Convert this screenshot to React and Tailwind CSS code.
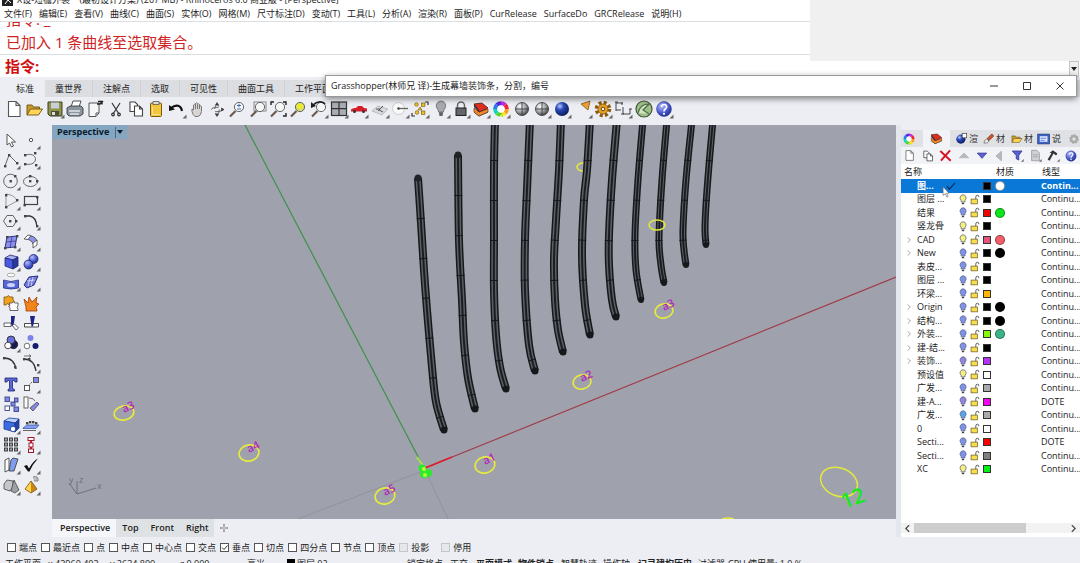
import React, { useState } from 'react';

const menus = [
  '文件(F)', '编辑(E)', '查看(V)', '曲线(C)', '曲面(S)', '实体(O)', '网格(M)', '尺寸标注(D)', '变动(T)',
  '工具(L)', '分析(A)', '渲染(R)', '面板(P)', 'CurRelease', 'SurfaceDo', 'GRCRelease', '说明(H)',
];

const toolTabs = ['标准', '童世界', '注解点', '选取', '可见性', '曲面工具', '工作平面'];

const wheelColors = ['#ff9a1f', '#ffe61f', '#4fd62b', '#19cfc0', '#2a7af0', '#4d2be0', '#c42be0', '#f0243c'];

// Small shared shapes
const Dots = ({ at, fill = '#444' }) => at.map(([x, y]) => (
  <rect key={`${x}-${y}`} x={x - 1} y={y - 1} width="2.4" height="2.4" fill={fill} />
));

const Wheel = () => (
  <g>
    {wheelColors.map((color, i) => (
      <circle key={color} cx="10" cy="10" r="5.3" fill="none" stroke={color} strokeWidth="3.6"
        pathLength="8" strokeDasharray="1 7" strokeDashoffset={-i} />
    ))}
    <circle cx="10" cy="10" r="3.2" fill="#fff" />
  </g>
);

const Lens = ({ fill = '#f4f6f8' }) => (
  <g>
    <path d="M8.5 12 L3 17.5" stroke="#6b5a4a" strokeWidth="2.2" />
    <circle cx="12" cy="8" r="4.6" fill={fill} stroke="#666" />
  </g>
);

const Page = () => <path d="M4.5 2.5 h7.5 l4 4 v11 h-11.5 z M12 2.5 v4 h4" fill="#fff" stroke="#555" strokeWidth="1.1" />;

const Layers = () => (
  <g>
    <path d="M3 13 l5 4 9-4 -5-4z" fill="#fff" stroke="#444" />
    <path d="M3 9 l5 4 9-3 v3 l-9 4 -5-4z" fill="#f08a2a" stroke="#6a3a1a" strokeWidth=".7" />
    <path d="M3 5 l8-1 6 5 -9 4z" fill="#e02e1e" stroke="#4a1a1a" strokeWidth=".8" />
    <path d="M3 5 v3 l5 5 v-2z" fill="#333" />
  </g>
);

const Help = () => (
  <g>
    <circle cx="10" cy="10" r="7.4" fill="url(#blueBall)" stroke="#24348c" strokeWidth=".6" />
    <path d="M7.5 8 C7.5 4.5 13 4.8 12.6 8 C12.4 10 10 9.8 10 12.4" fill="none" stroke="#fff" strokeWidth="1.7" />
    <circle cx="10" cy="14.8" r="1.1" fill="#fff" />
  </g>
);

const toolbarIcons = [
  ['新建', false, <Page />],
  ['打开', false, <g stroke="#6b5214" strokeWidth=".9"><path d="M3 16 V6 h5 l1.500 2 h6 v3" fill="#c99a2e" /><path d="M3 16 l3.500-6 h12 l-4 6z" fill="#ffd457" /></g>],
  ['保存', true, <g><path d="M3 3 h14 v14 h-12 l-2-2z" fill="#8f9448" stroke="#3c3e22" /><rect x="6" y="3.5" width="8" height="6" fill="#c9cfd9" /><rect x="6" y="12" width="8" height="5" fill="#4b4d3a" /><rect x="7" y="13" width="3" height="3" fill="#ddd" /></g>],
  ['打印', false, <g stroke="#3a3f44" strokeWidth=".9"><path d="M6 8 l2-6 h8 l-2 6z" fill="#fff" /><path d="M2 9 l3-2 h11 l2 2 v6 l-3 2 H4 l-2-2z" fill="#8a949c" /><path d="M4 12 h11 M5 15 h9" stroke="#dfe6ea" strokeWidth="1.4" /></g>],
  ['文件属性', false, <g><path d="M4 4 h10 v10 l-3 3.5 h-7z" fill="#f6f7f9" stroke="#555" /><path d="M12 5 h3 l3-3 M13 2.500 h4 v3" fill="none" stroke="#222" strokeWidth="1.4" /><path d="M14 14 h-3 v3" fill="none" stroke="#555" /></g>],
  ['剪切', false, <g fill="none" stroke="#333" strokeWidth="1.2"><path d="M6 4 l7 11 M14 4 L7 15" /><circle cx="7" cy="15.5" r="1.3" /><circle cx="13" cy="15.5" r="1.3" /></g>],
  ['复制', false, <g fill="#fff" stroke="#444" strokeWidth="1.1"><path d="M4 3 h5 l2.500 2.500 v7 h-7.500z" /><path d="M8.500 7 h5 l3 3 v7 h-8z M13.500 7 v3 h3" /></g>],
  ['粘贴', false, <g><rect x="4.500" y="4" width="11" height="13.500" rx="1" fill="#f3c53a" stroke="#7a5c12" /><path d="M7 2.500 h6 v3 H7z" fill="#ddd" stroke="#555" strokeWidth=".8" /><path d="M6.500 8 v7.500 h7" stroke="#ffe38a" fill="none" /></g>],
  ['复原', true, <g><path d="M4 9 C9 5 14 6 15 12" fill="none" stroke="#111" strokeWidth="2.200" /><path d="M2 6 v6 l6-1.500z" fill="#111" /></g>],
  ['平移', false, <path d="M5 10 l1.500 1 V6 q1-1.500 2 0 V4.500 q1-1.500 2 0 V5.500 q1.200-1.300 2 0 V7 q1.500-1 2 .5 v5 q-.5 4-3.500 5 h-3 q-2.500-2-3-5z M8.500 6 v4 M10.500 6 v4 M12.500 7 v3" fill="#d8d4d2" stroke="#777" />],
  ['旋转视图', false, <g fill="none" stroke="#666"><ellipse cx="10" cy="10.500" rx="2.200" ry="5" strokeDasharray="8 4" /><ellipse cx="10" cy="10.500" rx="5.500" ry="2.200" strokeDasharray="8 4" /><path d="M8.500 6 l1.500-2.500 1.500 2.500z M8.500 15 l1.500 2.500 1.500-2.500z M14.500 9 l2.500 1.500-2.500 1.500z" fill="#333" stroke="#333" strokeWidth=".6" /></g>],
  ['动态缩放', false, <g><Lens /><path d="M10 6.500 h4 M12 4.700 v3.600 M10 10 h4" stroke="#3568a8" strokeWidth=".9" /></g>],
  ['框选缩放', false, <g><rect x="6" y="3" width="12" height="9" fill="none" stroke="#888" /><Lens /></g>],
  ['缩放至最大范围', false, <g><Lens /><path d="M3 6 V3 h3 M15 3 h3 v3 M18 14 v3 h-3" fill="none" stroke="#222" strokeWidth="1.400" /></g>],
  ['缩放至选取', false, <g><Lens fill="#d9de6a" /><circle cx="12" cy="7" r="2.600" fill="#eef01c" /></g>],
  ['复原视图', true, <g><Lens /><path d="M4 6 C8 2 14 2 16 5" fill="none" stroke="#222" strokeWidth="1.700" /><path d="M2 3 v6 l5-2z" fill="#222" /></g>],
  ['四视图', true, <g><rect x="2.500" y="3" width="15" height="13.500" fill="#a8adb4" stroke="#333" strokeWidth="1.200" /><path d="M10 3 v13.500 M2.500 9.700 h15" stroke="#333" strokeWidth="1.200" /></g>],
  ['设置视图', true, <g><path d="M2 10.500 q2-2 5-1.500 l2-2 h4 l2 2 3 .5 v3 H2z" fill="#d81f28" /><circle cx="5.500" cy="12.500" r="1.500" fill="#333" /><circle cx="14.500" cy="12.500" r="1.500" fill="#333" /></g>],
  ['设置工作平面', true, <g><path d="M2 12 l6-5 10 3 -6 6z" fill="#d9dade" stroke="#aaa" strokeWidth=".7" /><path d="M8 12 l5-5 M10 10 h-4 M9 11 l4 2" stroke="#555" /></g>],
  ['物件锁点', true, <g><circle cx="8.500" cy="9.500" r="6" fill="#fafafa" stroke="#ccc" /><path d="M8 9.500 h10" stroke="#666" strokeWidth="1.300" /><circle cx="8.500" cy="9.500" r="1.300" fill="#444" /></g>],
  ['选取', true, <g><path d="M15 3 h3 v3 M2 14 v3 h3" fill="none" stroke="#333" strokeWidth="1.200" /><g fill="#f2c01e" stroke="#6b5214" strokeWidth=".6"><circle cx="6.500" cy="5.500" r="1.800" /><rect x="11.500" y="4" width="3.400" height="3.400" /><path d="M10 8 l2 3 h-4z" /><circle cx="7" cy="13.500" r="1.800" /><rect x="11.500" y="12" width="3.400" height="3.400" /></g></g>],
  ['隐藏', true, <g><path d="M10 2 a4.800 4.800 0 0 1 3.500 8 q-1 1-1 3 h-5 q0-2-1-3 A4.800 4.800 0 0 1 10 2z" fill="#a6a9ad" stroke="#666" strokeWidth=".8" /><path d="M8 14.200 h4 M8.300 16 h3.400" stroke="#333" strokeWidth="1.300" /></g>],
  ['锁定', true, <g><path d="M6.500 9 V6.500 a3.500 3.500 0 0 1 7 0 V9" fill="none" stroke="#666" strokeWidth="1.500" /><rect x="5" y="9" width="10" height="7.500" fill="#63666b" stroke="#222" /></g>],
  ['图层', true, <Layers />],
  ['属性', true, <g transform="translate(-1 -1) scale(1.1)"><Wheel /></g>],
  ['线框模式', false, <g><circle cx="10" cy="10" r="6.500" fill="url(#grayBall)" stroke="#333" strokeWidth=".8" /><path d="M10 3.500 v13 M3.500 10 h13" stroke="#333" strokeWidth=".8" /></g>],
  ['着色模式', true, <g><circle cx="10" cy="10" r="6.500" fill="url(#grayBall)" stroke="#333" strokeWidth=".8" /><path d="M10 3.500 v13 M3.500 10 h13" stroke="#333" strokeWidth=".8" /></g>],
  ['渲染', true, <circle cx="10" cy="10" r="7" fill="url(#navyBall)" />],
  ['灯光', true, <path d="M8 5 l9-3 -2 9z" fill="#f0a030" stroke="#7a5a1a" strokeWidth=".8" />],
  ['选项', true, <g><circle cx="10" cy="10" r="6" fill="none" stroke="#8a5a10" strokeWidth="4.600" strokeDasharray="2.700 2" /><circle cx="10" cy="10" r="5" fill="#e8a020" stroke="#8a5a10" strokeWidth=".8" /><circle cx="10" cy="10" r="1.800" fill="#f3f3f5" stroke="#6a4410" /></g>],
  ['尺寸标注', true, <g fill="none" stroke="#444"><path d="M3 3 v9 M3 4 h7 M3 11 h5 M10 8 v7 h7 v-5" /><path d="M2 3 h3 M9 3 v3 M8 15 h3 M16 10 h3" /></g>],
  ['Grasshopper', false, <g><circle cx="10" cy="10" r="8" fill="#9cc088" stroke="#47553e" strokeWidth="1.200" /><path d="M4 14 Q6 5 15 5 L9 11 L15 15" fill="#d3e6c4" stroke="#4e6a42" strokeWidth="1.200" /></g>],
  ['说明', true, <Help />],
];

const sideIcons = [
  ['指针', false, <path d="M6 4 v11 l2.500-2 2 4 2-1 -2-4 h4z" fill="#fff" stroke="#555" />],
  ['点', true, <circle cx="10" cy="10" r="1.700" fill="#fff" stroke="#555" />],
  ['多重直线', true, <g><path d="M4 16 L8 5 L16 13" fill="none" stroke="#666" /><Dots at={[[4, 16], [8, 5], [16, 13]]} /></g>],
  ['曲线', true, <g><path d="M4 5 C18 1 18 17 4 14" fill="none" stroke="#666" /><Dots at={[[4, 5], [14, 3], [4, 14], [15, 15]]} /></g>],
  ['圆', true, <g><circle cx="9.500" cy="10" r="6.800" fill="none" stroke="#666" /><Dots at={[[9.5, 10], [14, 5]]} /></g>],
  ['椭圆', true, <g><ellipse cx="9.500" cy="10.500" rx="7" ry="5" fill="none" stroke="#666" /><Dots at={[[9, 10], [9, 5], [16, 10]]} /></g>],
  ['圆弧', true, <g><path d="M5 3 Q14 4 16 10 L5 16z" fill="none" stroke="#999" /><Dots at={[[5, 4], [16, 9], [5, 16]]} /></g>],
  ['矩形', true, <g><rect x="3.500" y="5.500" width="13" height="8" fill="none" stroke="#444" strokeWidth="1.200" /><Dots at={[[3.5, 14], [16, 6]]} /></g>],
  ['多边形', true, <g><path d="M6 4.500 h6 l3.500 5.500 -3.500 5.500 h-6 L2.500 10z" fill="none" stroke="#666" /><Dots at={[[9, 10], [15, 10]]} /></g>],
  ['曲线圆角', true, <g><path d="M4 5 h5 Q15 6 16 16" fill="none" stroke="#333" strokeWidth="1.300" /><Dots at={[[4, 5], [16, 15]]} /></g>],
  ['曲面', true, <g><path d="M6 5 l10-1 -2 11 -10 1z" fill="#8d92e6" stroke="#30338a" /><path d="M11 4.500 L9 16 M5 10 l10-1" stroke="#30338a" strokeWidth=".7" /><Dots at={[[6, 5], [16, 4], [14, 15], [4, 16]]} /></g>],
  ['曲面圆角', true, <g><path d="M6 4 Q14 3 16 9 l-4 3 Q11 8 5 7z" fill="#8d92e6" stroke="#444" strokeWidth=".8" /><path d="M3 7 l4-4 3 .5 -3 4z M12 11 l4-3 v5 l-4 3z" fill="#fff" stroke="#444" strokeWidth=".8" /></g>],
  ['立方体', true, <g stroke="#1c2470" strokeWidth=".8"><path d="M4 6 l5-3 8 2 -5 3z" fill="#a9b2f5" /><path d="M4 6 l8 2 v9 l-8-3z" fill="#4a5ae0" /><path d="M12 8 l5-3 v9 l-5 3z" fill="#2c389e" /></g>],
  ['布尔运算', true, <g stroke="#1c2470" strokeWidth=".8"><circle cx="12.500" cy="7" r="4.500" fill="url(#blueBall)" /><circle cx="7.500" cy="12.500" r="4.500" fill="url(#blueBall)" /></g>],
  ['投影曲线', true, <g><ellipse cx="10" cy="3" rx="4" ry="1.800" fill="#fff" stroke="#999" strokeWidth=".8" /><path d="M2.500 8 q7.500 3 15 0 v8 q-7.500 2-15 0z" fill="#5566d8" stroke="#26307e" strokeWidth=".8" /><ellipse cx="10" cy="13" rx="4" ry="2" fill="#cdd3fa" /></g>],
  ['网格', true, <g><path d="M3 13 l5-8 9-1 -4 9 -7 3z" fill="#7078dc" stroke="#2a2e80" strowidth=".8" /><path d="M6 9 l8-1 M9 6 L7 14 M12 5 l-2 9" stroke="#dfe2ff" strokeWidth=".8" /></g>],
  ['组合', false, <g><path d="M3 4 h3 q1-3 3 0 h3 v3 q3 1 0 3 v2 H8 q-1-3-3 0 H3z" fill="#f0a21e" stroke="#7a5010" strokeWidth=".8" /><path d="M8 10 h3 q1-2 3 0 h3 v3 q-2 1 0 3 v1.500 h-8 v-3 q-3-1 0-2z" fill="#fff" stroke="#444" strokeWidth=".8" /></g>],
  ['炸开', false, <path d="M3 6 l4 4 1-6 3 5 5-5 -1 6 3 1 -3 3 1 4 H5 l0-4z" fill="#f0851c" stroke="#a03c08" strokeWidth=".8" />],
  ['修剪', false, <g><path d="M3 10 h7 v3.500 h-7z M11 12 l4 5 2.500-2 -4-4z" fill="#fff" stroke="#444" strokeWidth=".8" /><path d="M10 3 h4 l-1 7 -2 3.500 -1-3z" fill="#1d2384" /></g>],
  ['分割', false, <g><path d="M3.500 10.500 h14 v3.500 h-14z" fill="#fff" stroke="#333" strokeWidth=".9" /><path d="M9 3 h5 l-2 10.500 h-1.500z" fill="#1d2384" /></g>],
  ['布尔交集', true, <g stroke="#222" strokeWidth=".8"><circle cx="12.500" cy="11.500" r="4.200" fill="#181c50" /><circle cx="10" cy="7" r="4" fill="#6a70d8" /><circle cx="7" cy="12.500" r="3.300" fill="#fff" /></g>],
  ['群组', false, <g stroke="#555" strokeWidth=".8"><circle cx="9.500" cy="5" r="3" fill="#7d82ea" stroke="none" /><circle cx="6" cy="13" r="2.800" fill="#fff" /><circle cx="14.500" cy="13" r="3" fill="#141a6c" stroke="none" /></g>],
  ['编辑点', false, <g><path d="M3 4 Q13 4 15 15" fill="none" stroke="#333" strokeWidth="1.300" /><Dots at={[[3, 4], [14, 13]]} /></g>],
  ['重建曲线', true, <g><path d="M3 5 Q13 5 15 17" fill="none" stroke="#333" strokeWidth="1.300" /><path d="M3 2 h7 l-2-1.500 M10 2 l-2 1.500" stroke="#555" fill="none" strokeWidth=".8" /><Dots at={[[3, 5], [8, 5], [17, 11]]} /></g>],
  ['文字', false, <path d="M4 4 h12 v4 h-2 l-.5-1.500 h-2 v8 l2 1 v1.500 H7 v-1.500 l1.500-1 v-8 H6.500 L6 8 H4z" fill="#5a68d8" stroke="#1c2470" strokeWidth=".8" />],
  ['移动', true, <g stroke="#555"><path d="M7 12 l6-6" strokeDasharray="2 1.500" /><rect x="3.500" y="11.500" width="5" height="5" fill="#fff" /><rect x="12.500" y="3.500" width="5" height="5" fill="#8288e8" /></g>],
  ['复制物件', false, <g stroke="#3a4388" strokeWidth=".9"><rect x="4" y="3" width="4.500" height="4.500" fill="#8288e8" /><rect x="4" y="12" width="4.500" height="4.500" fill="#fff" /><rect x="10" y="8" width="4" height="4" fill="#8288e8" /><rect x="13.500" y="4" width="3.500" height="4" fill="#8288e8" /><rect x="13" y="13" width="4.500" height="4.500" fill="#8288e8" /></g>],
  ['旋转', false, <g stroke="#555" strokeWidth=".9"><rect x="3" y="3" width="4" height="11" fill="#fff" /><path d="M9 14 l7-6 2 2 -6 7z" fill="#8288e8" /><path d="M8 4 q5 0 6 3" fill="none" /></g>],
  ['边缘圆角', true, <g stroke="#1c3a90" strokeWidth=".8"><path d="M3 6 l5-3 10 1 -4 4z" fill="#bcd0ff" /><path d="M3 6 l11 2 v9 l-11-3z" fill="#3c6ae0" /><path d="M14 8 l4-4 v9 l-4 4z" fill="#24429e" /><circle cx="12" cy="14" r="2.700" fill="#fff" /></g>],
  ['沿曲面流动', true, <g><path d="M2 13 l4-3 h12 l-3 3.500 H2z" fill="#86a0f0" stroke="#2a4cb0" strokeWidth=".7" /><Dots at={[[6, 8], [9, 7], [12, 7], [15, 8]]} /><path d="M2 15.500 h13" stroke="#666" /></g>],
  ['阵列', true, <g fill="#a0a3ab" stroke="#333" strokeWidth=".9">{[3.5, 8.5, 13.5].map((x) => [3, 8, 13].map((y) => <rect key={`${x}${y}`} x={x} y={y} width="3" height="3" />))}</g>],
  ['对齐', true, <g><path d="M10 3 v13" stroke="#d02030" strokeWidth="2" /><g fill="#fff" stroke="#a01828"><rect x="7" y="2.500" width="6" height="3" /><rect x="8" y="8" width="4" height="4" /><rect x="7.500" y="14" width="5" height="3.500" /></g></g>],
  ['设置XYZ', true, <g stroke="#444" strokeWidth=".9"><path d="M4 5 l4-2 v12 l-4 2z" fill="#fff" /><path d="M10 5 l2-2 5 1 -4 12 h-5z" fill="#7f9cf0" /></g>],
  ['检查', true, <path d="M3 11 l3-1 2 3.500 Q12 6 17 3.500 Q11 10 8.500 16.500 h-1.500z" fill="#111" />],
  ['基本实体', true, <g stroke="#444" strokeWidth=".8"><path d="M3 8 l3-4 6 1 v6 l-3 4 -6-2z" fill="#c4c7ca" /><path d="M13 4 l5 10 -4 3 -4-2z" fill="#9ea2a6" /></g>],
  ['金字塔', true, <g><path d="M12 1 q3-2 5 1 v3 h-4" fill="#bbb" stroke="#777" strokeWidth=".8" /><path d="M10 5 L4 13 l6 4z" fill="#ffd34a" /><path d="M10 5 l6 8 -6 4z" fill="#c98612" /><path d="M10 5 L4 13 l6 4 6-4z" fill="none" stroke="#7a5010" strokeWidth=".8" /></g>],
];

// Points of each strip in viewport space, top to bottom
const strips = [
  { w: 8, pts: [[418, 178], [421, 223], [424, 270], [427, 310], [432, 367], [436, 402], [444, 430]] },
  { w: 8, pts: [[458, 155], [459, 240], [462, 300], [464, 342], [468, 378], [475, 409]] },
  { w: 8, pts: [[495, 120], [494, 170], [494, 240], [494, 290], [496, 335], [500, 367], [506, 389]] },
  { w: 8, pts: [[530, 120], [527, 190], [525, 240], [525, 290], [529, 345], [535, 371]] },
  { w: 8, pts: [[561, 120], [559, 170], [556, 220], [554, 260], [555, 300], [558, 330], [563, 352]] },
  { w: 8, pts: [[590, 120], [587, 170], [584, 200], [582, 255], [585, 305], [590, 335]] },
  { w: 8, pts: [[617, 120], [612, 180], [609, 235], [609, 265], [612, 300], [616, 317]] },
  { w: 7, pts: [[643, 120], [638, 180], [635, 235], [636, 270], [641, 300]] },
  { w: 7, pts: [[667, 120], [662, 180], [659, 238], [661, 265], [664, 283]] },
  { w: 7, pts: [[692, 120], [686, 180], [683, 230], [684, 250], [686, 265]] },
  { w: 7, pts: [[713, 120], [709, 165], [706, 205], [705, 230], [706, 245]] },
];

const markers = [
  { x: 124, y: 413, rx: 10, ry: 7, label: 'a3' },
  { x: 249, y: 453, rx: 10, ry: 8, label: 'a4' },
  { x: 385, y: 496, rx: 10, ry: 8, label: 'a5' },
  { x: 485, y: 465, rx: 10, ry: 8, label: 'a1' },
  { x: 582, y: 382, rx: 9, ry: 7, label: 'a2' },
  { x: 664, y: 311, rx: 9, ry: 7, label: 'a3' },
];

// Catmull-Rom spline through the points
const toPath = (pts) => {
  let d = `M${pts[0][0]} ${pts[0][1]}`;
  for (let i = 0; i < pts.length - 1; i++) {
    const p0 = pts[i - 1] || pts[i];
    const p1 = pts[i];
    const p2 = pts[i + 1];
    const p3 = pts[i + 2] || p2;
    d += ` C${p1[0] + (p2[0] - p0[0]) / 6} ${p1[1] + (p2[1] - p0[1]) / 6}`;
    d += ` ${p2[0] - (p3[0] - p1[0]) / 6} ${p2[1] - (p3[1] - p1[1]) / 6} ${p2[0]} ${p2[1]}`;
  }
  return d;
};

const B = '#7d93e8';
const Y = '#f5f07a';
const layers = [
  { name: '图...', color: '#000', material: '#fff', line: 'Contin...', current: true },
  { name: '图层 ...', bulb: Y, color: '#000' },
  { name: '结果', bulb: B, color: '#f50000', material: '#0ce61c' },
  { name: '竖龙骨', bulb: Y, color: '#000' },
  { name: 'CAD', bulb: Y, color: '#e8527a', material: '#f0606c', open: true },
  { name: 'New', bulb: B, color: '#000', material: '#000', open: true },
  { name: '表皮...', bulb: B, color: '#000' },
  { name: '图层 ...', bulb: B, color: '#000' },
  { name: '环梁...', bulb: B, color: '#ffb400' },
  { name: 'Origin', bulb: B, color: '#000', material: '#000', open: true },
  { name: '结构...', bulb: B, color: '#000', material: '#000', open: true },
  { name: '外装...', bulb: B, color: '#82fa00', material: '#3cb488', open: true },
  { name: '建-结...', bulb: B, color: '#000', open: true },
  { name: '装饰...', bulb: '#9184e0', color: '#b432fa', open: true },
  { name: '预设值', bulb: Y, color: '#fff' },
  { name: '广发...', bulb: B, color: '#aaa' },
  { name: '建-A...', bulb: '#9184e0', color: '#f500f0', line: 'DOTE' },
  { name: '广发...', bulb: '#5aa4e8', color: '#aaa' },
  { name: '0', bulb: B, color: '#fff' },
  { name: 'Secti...', bulb: B, color: '#fa0000', line: 'DOTE' },
  { name: 'Secti...', bulb: B, color: '#808080' },
  { name: 'XC', bulb: Y, color: '#00f014' },
];

const snaps = ['端点', '最近点', '点', '中点', '中心点', '交点', '垂点', '切点', '四分点', '节点', '顶点'];

const IconButton = ({ label, flyout, children, size = 'size-5' }) => (
  <button type="button" aria-label={label} className="flex items-center justify-center">
    <svg viewBox="0 0 20 20" className={`${size} shrink-0`}>
      {children}
      {flyout && <path d="M19.500 15.500 v4 h-4z" fill="#666" />}
    </svg>
  </button>
);

const SvgDefs = () => (
  <svg className="absolute size-0" aria-hidden="true">
    <defs>
      <radialGradient id="grayBall" cx=".35" cy=".3" r=".8"><stop offset="0" stopColor="#fff" /><stop offset=".5" stopColor="#a4a7aa" /><stop offset="1" stopColor="#333" /></radialGradient>
      <radialGradient id="navyBall" cx=".35" cy=".3" r=".8"><stop offset="0" stopColor="#b9ccff" /><stop offset=".35" stopColor="#2849b8" /><stop offset="1" stopColor="#081248" /></radialGradient>
      <radialGradient id="blueBall" cx=".35" cy=".3" r=".8"><stop offset="0" stopColor="#b4bcff" /><stop offset=".6" stopColor="#4656cc" /><stop offset="1" stopColor="#1e2a80" /></radialGradient>
    </defs>
  </svg>
);

const Viewport = () => (
  <div className="relative min-h-0 flex-1 overflow-hidden bg-[#9fa2ac]">
    <svg viewBox="52 125 844 394" preserveAspectRatio="xMinYMin slice" className="size-full">
      <path d="M425 470 L298 519 M425 470 L448 519" stroke="#90939c" fill="none" />
      <path d="M245 125 L425 470" stroke="#3f9148" strokeWidth="1.200" />
      <path d="M425 468 L896 277" stroke="#a13c49" strokeWidth="1.200" />
      <path d="M425 468 L452 457" stroke="#e01c2c" strokeWidth="1.500" />
      <path d="M417 457 L424 467" stroke="#a8e04c" strokeWidth="2" />

      <g fill="none" stroke="#e3ea3c" strokeWidth="1.500">
        <ellipse cx="583" cy="167" rx="6" ry="4" />
        <ellipse cx="839" cy="482" rx="19" ry="14" transform="rotate(22 839 482)" />
        <ellipse cx="728" cy="522" rx="8" ry="4" />
      </g>

      {strips.map(({ w, pts }) => {
        const d = toPath(pts);
        return (
          <g key={pts[0][0]} fill="none">
            <path d={d} stroke="#17181b" strokeWidth={w} strokeLinejoin="round" />
            <path d={d} stroke="#5c5f66" strokeWidth={w - 3} />
            <path d={d} stroke="#1c1d21" strokeWidth="2" />
            <path d={d} stroke="#17181b" strokeWidth={w} strokeDasharray="1 39" strokeDashoffset="-40" />
            <circle cx={pts[pts.length - 1][0]} cy={pts[pts.length - 1][1]} r={w / 2 - .5} fill="#17181b" />
            <circle cx={pts[0][0]} cy={pts[0][1]} r={w / 2 - .5} fill="#222327" />
          </g>
        );
      })}
      <ellipse cx="657" cy="225" rx="8" ry="5" fill="none" stroke="#e3ea3c" strokeWidth="1.500" />

      {markers.map(({ x, y, rx, ry, label }) => (
        <g key={x}>
          <ellipse cx={x} cy={y} rx={rx} ry={ry} fill="none" stroke="#e6ea3e" strokeWidth="1.700" transform={`rotate(-12 ${x} ${y})`} />
          <text x={x} y={y} fontSize="11" fontWeight="600" fill="#b428b8" transform={`rotate(-25 ${x} ${y})`}>{label}</text>
        </g>
      ))}

      <g fill="#2bea2b">
        <circle cx="422" cy="468" r="3.500" />
        <circle cx="428" cy="473" r="4" />
        <circle cx="424" cy="474" r="4" />
        <circle cx="424" cy="469" r="2" fill="#b8fa3c" />
        <circle cx="425" cy="475" r="2" fill="#b8fa3c" />
      </g>
      <text x="844" y="509" fontSize="21" fontWeight="600" fill="#14ea1e" transform="rotate(-20 844 509)">12</text>

      <path d="M69 483 L77 494 L96 488 M77 494 V481" stroke="#6d7078" fill="none" />
      <g fontSize="9" fill="#6d7078">
        <text x="69" y="483">y</text>
        <text x="79" y="483">z</text>
        <text x="97" y="489">x</text>
      </g>
    </svg>
    <button type="button" className="absolute top-0 left-0 flex h-[14px] items-center bg-[#84a6c0] pr-1 pl-[5px] text-[9px] font-bold text-[#0a1a2c]">
      Perspective
      <span className="ml-[6px] h-[11px] border-l border-[#4f6a80]" />
      <svg viewBox="0 0 6 4" className="ml-px h-1 w-[6px]"><path d="M0 0 h6 l-3 4z" fill="#0a1a2c" /></svg>
    </button>
  </div>
);

const LayerPanel = () => (
  <aside className="flex w-[179px] shrink-0 flex-col overflow-hidden text-[9px] text-[#222]">
    {/* Panel tabs */}
    <div role="tablist" className="mt-[5px] flex h-[17px] shrink-0 items-center bg-[#dfe1e5] text-[#333]">
      <button type="button" role="tab" aria-label="属性" className="flex w-[22px] justify-start pl-px"><svg viewBox="1 1 18 18" className="size-[14px]"><Wheel /></svg></button>
      <button type="button" role="tab" aria-label="图层" aria-selected="true" className="flex h-full w-[27px] items-center justify-center bg-[#f2f3f6]"><svg viewBox="0 0 20 20" className="size-[15px]"><Layers /></svg></button>
      <button type="button" role="tab" className="flex w-[28px] items-center justify-end gap-px">
        <svg viewBox="0 0 20 20" className="size-[13px]"><circle cx="9" cy="11" r="7" fill="url(#navyBall)" /><rect x="11" y="2" width="7" height="7" fill="#fff" stroke="#333" /></svg>渲
      </button>
      <button type="button" role="tab" className="flex w-[27px] items-center justify-end gap-px">
        <svg viewBox="0 0 20 20" className="size-[13px]"><path d="M3 17 q0-5 4-6 l4 3 q-2 4-8 3z" fill="#eee" stroke="#555" /><path d="M8 10 l7-7 3 3 -7 7z" fill="#d8502a" stroke="#5a2410" /></svg>材
      </button>
      <button type="button" role="tab" className="flex w-[28px] items-center justify-end gap-px">
        <svg viewBox="0 0 20 20" className="size-[13px]">{toolbarIcons[1][2]}</svg>材
      </button>
      <button type="button" role="tab" className="flex w-[28px] items-center justify-end gap-px">
        <svg viewBox="0 0 20 20" className="size-[14px]"><rect x="1" y="3" width="17" height="14" fill="#3c62c4" stroke="#24387a" /><rect x="4" y="6" width="11" height="8" fill="#dce6ff" /><path d="M5 9 h8 M5 12 h6" stroke="#3c62c4" /></svg>说
      </button>
      <button type="button" aria-label="面板选项" className="flex w-[18px] justify-end">
        <svg viewBox="0 0 20 20" className="size-[10px]"><circle cx="10" cy="10" r="6" fill="none" stroke="#aaa" strokeWidth="5" /><circle cx="10" cy="10" r="8" fill="none" stroke="#aaa" strokeWidth="3" strokeDasharray="3 3.200" /></svg>
      </button>
    </div>
    {/* Layer actions */}
    <div className="grid h-[17px] shrink-0 grid-cols-10 bg-[#f2f3f6]">
      <IconButton label="新图层" size="size-[13px]"><Page /></IconButton>
      <IconButton label="新子图层" size="size-[14px]">{toolbarIcons[6][2]}</IconButton>
      <IconButton label="删除" size="size-[13px]"><path d="M2 3 L18 18 M17 2 L3 18" stroke="#d41224" strokeWidth="3" /></IconButton>
      <IconButton label="上移" size="size-3"><path d="M2 13 l8-8 8 8z" fill="#b8bac0" stroke="#aaa" /></IconButton>
      <IconButton label="下移" size="size-3"><path d="M2 5 h16 l-8 9z" fill="#5a5fd4" stroke="#30348c" /></IconButton>
      <IconButton label="上移一个父图层" size="size-3"><path d="M14 2 v16 l-9-8z" fill="#b8bac0" stroke="#999" /></IconButton>
      <IconButton label="过滤器" flyout size="size-[13px]"><path d="M2 3 h15 l-5 7 v7 l-4-2 v-5z" fill="#5a5fd4" stroke="#26297a" /></IconButton>
      <IconButton label="图层状态" flyout size="size-[13px]"><path d="M4 2 h8 l4 4 v12 h-12z" fill="#cfd1d6" stroke="#888" /><path d="M6 9 h8 M6 12 h8" stroke="#999" /></IconButton>
      <IconButton label="工具" flyout size="size-[13px]"><path d="M4 6 l5-4 7 5 -2 3 -4-3 -6 11 -3-2 6-10z" fill="#333" /></IconButton>
      <IconButton label="说明" size="size-[14px]"><Help /></IconButton>
    </div>
    {/* Layer list */}
    <div className="flex min-h-0 flex-1 flex-col justify-between overflow-hidden bg-white">
      <table className="h-[312px] w-full table-fixed border-collapse leading-[12px] whitespace-nowrap">
        <colgroup>
          <col className="w-4" />
          <col className="w-10" />
          <col className="w-3" />
          <col className="w-3" />
          <col className="w-3" />
          <col className="w-12" />
          <col />
        </colgroup>
        <thead>
          <tr className="h-[15px] text-left">
            <th scope="col" colSpan="5" className="p-0 pl-[3px] font-normal">名称</th>
            <th scope="col" className="p-0 pl-[3px] font-normal">材质</th>
            <th scope="col" className="p-0 pl-px font-normal">线型</th>
          </tr>
        </thead>
        <tbody>
          {layers.map((layer, i) => (
            <tr key={i} className={layer.current ? 'bg-[#0a78d6] font-bold text-white' : ''}>
              <td className="p-0">
                {layer.open && <svg viewBox="0 0 6 8" className="ml-[6px] h-[6px] w-1"><path d="M1 0 L5 4 L1 8" fill="none" stroke="#777" /></svg>}
              </td>
              <td className="p-0">
                <div className="flex items-center justify-between">
                  {layer.name}
                  {layer.current && <svg viewBox="0 0 12 10" className="h-2 w-3"><path d="M1 5 l3 4 L11 1" fill="none" stroke="#0b2f66" strokeWidth="1.500" /></svg>}
                </div>
              </td>
              <td className="p-0">
                {layer.bulb && (
                  <svg viewBox="0 0 12 14" className="mx-auto h-[11px] w-[10px]">
                    <path d="M6 1 a4 4 0 0 1 2.600 7 v2 h-5 v-2 A4 4 0 0 1 6 1z" fill={layer.bulb} stroke="#5d6488" />
                    <path d="M4.500 12 h3" stroke="#444" strokeWidth="2" />
                  </svg>
                )}
              </td>
              <td className="p-0">
                {!layer.current && (
                  <svg viewBox="0 0 12 14" className="mx-auto h-[11px] w-[10px]">
                    <path d="M7 7 V4 q0-2.500 2-2.500 t2 2.500" fill="none" stroke="#555" strokeWidth="1.200" />
                    <rect x="1" y="6.500" width="8" height="6" fill="#f7df4c" stroke="#7b6630" />
                  </svg>
                )}
              </td>
              <td className="p-0">
                <span className="mx-auto block size-2 border border-[#333]" style={{ backgroundColor: layer.color }} />
              </td>
              <td className="p-0">
                {layer.material && <span className="ml-[2px] block size-[10px] rounded-full border border-black/40" style={{ backgroundColor: layer.material }} />}
              </td>
              <td className="overflow-hidden p-0">{layer.line || 'Continu...'}</td>
            </tr>
          ))}
        </tbody>
      </table>
      <div className="mb-1 flex h-[10px] items-center gap-1 bg-[#f2f2f3] px-1">
        <svg viewBox="0 0 6 8" className="h-[7px] w-[5px]"><path d="M5 0 L1 4 L5 8" fill="none" stroke="#444" strokeWidth="1.500" /></svg>
        <div className="h-full flex-1"><div className="h-full w-[73%] bg-[#cdcdcd]" /></div>
        <svg viewBox="0 0 6 8" className="h-[7px] w-[5px]"><path d="M1 0 L5 4 L1 8" fill="none" stroke="#444" strokeWidth="1.500" /></svg>
      </div>
    </div>
  </aside>
);

const SnapBox = ({ label, checked, onChange, disabled }) => (
  <label className="relative flex items-center gap-[3px]">
    <input
      type="checkbox"
      checked={checked}
      onChange={onChange}
      disabled={disabled}
      className="size-[9px] appearance-none border border-[#555] bg-white disabled:border-[#c4c6ca] disabled:bg-[#e6e7ea]"
    />
    {checked && <svg viewBox="0 0 9 9" className="pointer-events-none absolute left-0 size-[9px]"><path d="M2 4.500 l2 2 L7.500 2.500" fill="none" stroke="#333" /></svg>}
    {label}
  </label>
);

const App = () => {
  const [active, setActive] = useState({ 垂点: true });

  const toggleSnap = (name) => {
    setActive({ ...active, [name]: !active[name] });
  };

  return (
    <div className="relative flex h-screen flex-col overflow-hidden bg-[#eceef3] font-['Open_Sans','Noto_Sans_CJK_SC',sans-serif] text-[9px] text-[#222]">
      <SvgDefs />

      {/* Title, menu and command history */}
      <div className="flex shrink-0">
        <div className="w-3/4 bg-white">
          <div className="flex h-[6px] items-end gap-1 overflow-hidden pl-[2px] leading-[13px] whitespace-pre">
            <svg viewBox="0 0 11 8" className="h-2 w-[11px] shrink-0"><path d="M0 0 h11 v8 H0z" fill="#222" /><path d="M3 6 L6 2 L9 5" stroke="#fff" fill="none" /></svg>
            <span>X设-短檐外装    (最初设计方案) (207 MB) - Rhinoceros 6.0 商业版 - [Perspective]</span>
          </div>
          <nav className="flex h-4 items-center gap-[7px] border-b border-[#dcdfe2] pl-1 whitespace-nowrap">
            {menus.map((menu) => <button key={menu} type="button">{menu}</button>)}
          </nav>
          <div className="flex h-8 flex-col justify-end overflow-hidden pl-[6px] text-[15px] leading-[23px] text-[#cf2323]">
            <p className="shrink-0">指令: _</p>
            <p className="shrink-0">已加入 1 条曲线至选取集合。</p>
          </div>
        </div>
        <div className="flex-1 bg-[#f0f0f0]" />
      </div>

      {/* Command line */}
      <div className="flex h-[23px] shrink-0 bg-white">
        <div className="flex w-3/4 items-center border-t border-[#dcdfe2] pl-[5px]">
          <label htmlFor="command" className="text-[15px] leading-5 font-bold text-[#d01010]">指令:</label>
          <input id="command" type="text" className="min-w-0 flex-1 text-[15px] outline-none" />
        </div>
        <div className="flex flex-1 justify-end border-t-[7px] border-[#f0f0f0] pr-px">
          <button type="button" aria-label="向下滚动" className="flex w-[10px] items-center justify-center border border-[#c4c4c4] bg-[#f0f0f0]">
            <svg viewBox="0 0 6 4" className="h-1 w-[6px]"><path d="M0 0 h6 l-3 4z" fill="#222" /></svg>
          </button>
        </div>
      </div>

      {/* Toolbar tabs */}
      <div className="flex h-5 shrink-0 pt-[3px] pl-[5px]">
        <div role="tablist" className="flex flex-1 bg-[#dcdde1] whitespace-nowrap">
          {toolTabs.map((tab, i) => (
            <button
              key={tab}
              type="button"
              role="tab"
              aria-selected={i === 0}
              className={i === 0 ? 'bg-[#eceef3] px-[11px]' : 'border-r border-[#d0d1d5] px-[10px]'}
            >
              {tab}
            </button>
          ))}
        </div>
      </div>

      <div className="ml-1 grid h-7 w-[670px] shrink-0 grid-cols-33 items-center pb-[5px]">
        {toolbarIcons.map(([label, flyout, art]) => (
          <IconButton key={label} label={label} flyout={flyout}>{art}</IconButton>
        ))}
      </div>

      <div className="flex min-h-0 flex-1">
        <div className="w-[52px] shrink-0">
          <div className="mt-[5px] ml-px grid h-[366px] w-10 grid-cols-2 grid-rows-18">
            {sideIcons.map(([label, flyout, art]) => (
              <IconButton key={label} label={label} flyout={flyout}>{art}</IconButton>
            ))}
          </div>
        </div>

        <main className="flex min-w-0 flex-1 flex-col">
          <Viewport />
          <div role="tablist" className="flex h-[18px] shrink-0 font-semibold">
            <button type="button" role="tab" aria-selected="true" className="bg-[#f5f6f9] pr-[6px] pl-2">Perspective</button>
            <button type="button" role="tab" className="bg-[#dfe2e5] px-[6px]">Top</button>
            <button type="button" role="tab" className="bg-[#dfe2e5] px-[6px]">Front</button>
            <button type="button" role="tab" className="bg-[#dfe2e5] px-[6px]">Right</button>
            <button type="button" aria-label="新工作视窗" className="px-[6px]">
              <svg viewBox="0 0 8 8" className="size-2"><path d="M4 0 v8 M0 4 h8" stroke="#999" strokeWidth="2" /><path d="M4 1 v6 M1 4 h6" stroke="#eee" strokeWidth=".6" /></svg>
            </button>
          </div>
        </main>

        <div className="w-[5px] shrink-0 bg-[#e4e7ee]" />
        <LayerPanel />
      </div>

      {/* Object snaps */}
      <div className="flex h-5 shrink-0 items-center gap-1 pt-px pl-[7px] whitespace-nowrap">
        {snaps.map((name) => (
          <SnapBox key={name} label={name} checked={!!active[name]} onChange={() => toggleSnap(name)} />
        ))}
        <SnapBox label="投影" checked={false} disabled />
        <span className="w-1" />
        <SnapBox label="停用" checked={false} disabled />
      </div>

      {/* Status bar */}
      <footer className="flex h-[6px] shrink-0 items-start overflow-hidden pl-[5px] leading-[13px] whitespace-nowrap">
        <span className="w-[43px]">工作平面</span>
        <span className="w-[62px]">x 43960.403</span>
        <span className="w-[70px]">y 2634.800</span>
        <span className="w-[67px]">z 0.000</span>
        <span className="w-10">毫米</span>
        <span className="mt-[2px] mr-[2px] size-2 bg-black" />
        <span className="w-[110px]">图层 02</span>
        <span className="w-[43px]">锁定格点</span>
        <span className="w-[26px]">正交</span>
        <b className="w-[42px]">平面模式</b>
        <b className="w-[43px]">物件锁点</b>
        <span className="w-[42px]">智慧轨迹</span>
        <span className="w-[35px]">操作轴</span>
        <b className="w-[60px]">记录建构历史</b>
        <span className="w-[30px]">过滤器</span>
        <span>CPU 使用量: 1.0 %</span>
      </footer>

      {/* Collapsed Grasshopper window */}
      <div role="dialog" aria-label="Grasshopper" className="absolute top-[75px] right-[3px] left-[325px] flex h-[22px] items-center border border-[#999] bg-white pl-[5px] shadow-[0_2px_6px_rgba(0,0,0,0.45)]">
        <span className="flex-1">Grasshopper(林师兄 译)-生成幕墙装饰条，分割，编号</span>
        <button type="button" aria-label="最小化" className="flex w-[33px] justify-center"><svg viewBox="0 0 8 8" className="size-2"><path d="M0 4 h8" stroke="#333" /></svg></button>
        <button type="button" aria-label="最大化" className="flex w-[33px] justify-center"><svg viewBox="0 0 8 8" className="size-2"><path d="M.5 .5 h7 v7 h-7z" fill="none" stroke="#333" /></svg></button>
        <button type="button" aria-label="关闭" className="flex w-[33px] justify-center"><svg viewBox="0 0 8 8" className="size-2"><path d="M.5 .5 l7 7 M7.500 .5 l-7 7" stroke="#333" /></svg></button>
      </div>

      {/* Mouse pointer */}
      <svg viewBox="0 0 10 14" className="absolute top-[186px] right-[129px] h-3 w-[9px]"><path d="M1 1 v10 l2.500-2 2 4 1.500-1 -2-3.500 h3z" fill="#fff" stroke="#556" strokeWidth=".7" /></svg>
    </div>
  );
};

export default App;
